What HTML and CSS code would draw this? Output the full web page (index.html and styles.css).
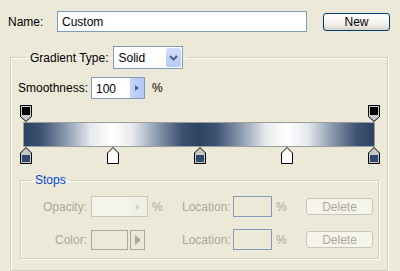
FILE: index.html
```html
<!DOCTYPE html>
<html>
<head>
  <title>Gradient Editor</title>
  <link rel="stylesheet" href="styles.css">
</head>
<body>
  <div class="name-row">
    <label class="name-label" for="name">Name:</label>
    <div class="text-field name-field">Custom</div>
    <button class="xp-button">New</button>
  </div>

  <fieldset class="group">
    <legend class="group-legend">
      <span>Gradient Type:</span>
      <div class="select">
        <span class="select-value">Solid</span>
        <span class="select-arrow">
          <svg width="9" height="6" viewBox="0 0 9 6"><path d="M1 1 L4.5 4.5 L8 1" fill="none" stroke="#4d6185" stroke-width="2"/></svg>
        </span>
      </div>
    </legend>

    <div class="smooth-row">
      <span class="smooth-label">Smoothness:</span>
      <div class="spin-field">
        <span class="spin-value">100</span>
        <span class="spin-arrow"><svg width="4" height="6" viewBox="0 0 4 6"><path d="M0 0 L4 3 L0 6 Z" fill="#4d6185"/></svg></span>
      </div>
      <span class="unit">%</span>
    </div>

    <div class="editor">
      <div class="marker-row">
        <svg class="marker" width="12" height="17" viewBox="0 0 12 17"><path d="M0.5 0.5 H11.5 V11.5 L6 16.5 L0.5 11.5 Z" fill="#c8c8c8" stroke="#000"/><rect x="2" y="2" width="8" height="8" fill="#000"/></svg>
        <svg class="marker" width="12" height="17" viewBox="0 0 12 17"><path d="M0.5 0.5 H11.5 V11.5 L6 16.5 L0.5 11.5 Z" fill="#c8c8c8" stroke="#000"/><rect x="2" y="2" width="8" height="8" fill="#000"/></svg>
      </div>
      <div class="gradient-bar"></div>
      <div class="marker-row">
        <svg class="marker" width="12" height="17" viewBox="0 0 12 17"><path d="M6 0.5 L11.5 6 V16.5 H0.5 V6 Z" fill="#c8c8c8" stroke="#000"/><rect x="2" y="8" width="8" height="7" fill="#2f4a6b"/></svg>
        <svg class="marker" width="12" height="17" viewBox="0 0 12 17"><path d="M6 0.5 L11.5 6 V16.5 H0.5 V6 Z" fill="#fff" stroke="#000"/></svg>
        <svg class="marker" width="12" height="17" viewBox="0 0 12 17"><path d="M6 0.5 L11.5 6 V16.5 H0.5 V6 Z" fill="#c8c8c8" stroke="#000"/><rect x="2" y="8" width="8" height="7" fill="#2f4a6b"/></svg>
        <svg class="marker" width="12" height="17" viewBox="0 0 12 17"><path d="M6 0.5 L11.5 6 V16.5 H0.5 V6 Z" fill="#fff" stroke="#000"/></svg>
        <svg class="marker" width="12" height="17" viewBox="0 0 12 17"><path d="M6 0.5 L11.5 6 V16.5 H0.5 V6 Z" fill="#c8c8c8" stroke="#000"/><rect x="2" y="8" width="8" height="7" fill="#2f4a6b"/></svg>
      </div>
    </div>

    <fieldset class="group stops">
      <legend class="stops-legend">Stops</legend>

      <div class="stop-row">
        <span class="stop-label">Opacity:</span>
        <div class="stop-field">
          <div class="spin-field disabled">
            <span class="spin-value"></span>
            <span class="spin-arrow"><svg width="4" height="6" viewBox="0 0 4 6"><path d="M0 0 L4 3 L0 6 Z" fill="#d6d3c6"/></svg></span>
          </div>
        </div>
        <span class="stop-unit">%</span>
        <span class="loc-label">Location:</span>
        <div class="loc-field"></div>
        <span class="loc-unit">%</span>
        <button class="xp-button disabled">Delete</button>
      </div>

      <div class="stop-row">
        <span class="stop-label">Color:</span>
        <div class="stop-field">
          <div class="color-box"></div>
          <div class="color-arrow"><svg width="6" height="10" viewBox="0 0 6 10"><path d="M0 0 L6 5 L0 10 Z" fill="#aca899"/></svg></div>
        </div>
        <span class="stop-unit"></span>
        <span class="loc-label">Location:</span>
        <div class="loc-field"></div>
        <span class="loc-unit">%</span>
        <button class="xp-button disabled">Delete</button>
      </div>
    </fieldset>
  </fieldset>
</body>
</html>
```

FILE: styles.css
```css
body {
  margin: 0;
  background-color: #ece9d8;
  font-family: "Liberation Sans", Arial, sans-serif;
  font-size: 12px;
  color: #000;
  width: 400px;
  height: 271px;
  overflow: hidden;
}

.name-row {
  display: flex;
  align-items: center;
  padding: 11px 0 0 8px;
  height: 21px;
}

.name-label {
  width: 49px;
}

.text-field {
  box-sizing: border-box;
  height: 21px;
  border: 1px solid #7f9db9;
  background-color: #fff;
  padding: 3px 0 0 4px;
}

.name-field {
  width: 250px;
}

.xp-button {
  box-sizing: border-box;
  font-family: inherit;
  font-size: 12px;
  border: 1px solid #003c74;
  border-radius: 3px;
  background: linear-gradient(#ffffff, #f3f2ec 60%, #d9d5c8);
  color: #000;
  padding: 0;
}

.name-row .xp-button {
  margin-left: 16px;
  width: 67px;
  height: 18px;
}

.group {
  box-sizing: border-box;
  margin: 14px 0 0 10px;
  width: 378px;
  padding: 0 0 11px 7px;
  border: 1px solid #d0d0bf;
  box-shadow: inset 1px 1px 0 #fff, 1px 1px 0 #fff;
  min-inline-size: 0;
}

.group-legend {
  display: flex;
  align-items: center;
  gap: 4px;
  margin-left: 8px;
  padding: 0 4px;
}

.select {
  box-sizing: border-box;
  width: 70px;
  height: 23px;
  border: 1px solid #7f9db9;
  background-color: #fff;
  display: flex;
  align-items: center;
}

.select-value {
  flex: 1;
  padding-left: 5px;
}

.select-arrow {
  width: 15px;
  height: 19px;
  margin-right: 1px;
  border-radius: 2px;
  background: linear-gradient(#d2defa, #b4c8f6);
  display: flex;
  align-items: center;
  justify-content: center;
}

.smooth-row {
  display: flex;
  align-items: center;
  margin-top: 8px;
  height: 22px;
}

.smooth-label {
  width: 73px;
}

.spin-field {
  box-sizing: border-box;
  width: 54px;
  height: 22px;
  border: 1px solid #7f9db9;
  background-color: #fff;
  display: flex;
}

.spin-value {
  flex: 1;
  padding: 4px 0 0 4px;
}

.spin-arrow {
  width: 14px;
  background: linear-gradient(90deg, #c6d6fa, #b2c6f4);
  display: flex;
  align-items: center;
  justify-content: center;
}

.unit {
  margin-left: 7px;
}

.editor {
  margin: 6px 0 0 2px;
  width: 360px;
}

.marker-row {
  display: flex;
  justify-content: space-between;
  height: 17px;
}

.marker {
  display: block;
}

.gradient-bar {
  box-sizing: border-box;
  height: 25px;
  margin: 0 5px 0 3px;
  border: 1px solid #9c9c9c;
  background: linear-gradient(90deg,
    #2c4462 0%, #3c5372 5%, #8b9bae 12%, #e6e9ee 19%, #ffffff 25%,
    #e6e9ee 31%, #8b9bae 38%, #3c5372 45%, #2c4462 50%,
    #3c5372 55%, #8b9bae 62%, #e6e9ee 69%, #ffffff 75%,
    #e6e9ee 81%, #8b9bae 88%, #3c5372 95%, #2c4462 100%);
}

.group.stops {
  margin: 9px 0 0 2px;
  width: 359px;
  padding: 0 0 8px 0;
}

.stops-legend {
  margin-left: 10px;
  padding: 0 4px;
  color: #0046d5;
}

.stop-row {
  display: flex;
  align-items: center;
  height: 21px;
  margin-top: 9px;
  color: #aca899;
}

.stop-row + .stop-row {
  margin-top: 12px;
}

.stop-label {
  width: 66px;
  text-align: right;
  margin-right: 4px;
}

.stop-field {
  width: 57px;
  display: flex;
  gap: 2px;
}

.spin-field.disabled {
  width: 57px;
  height: 21px;
  border-color: #c9c7ba;
  background-color: #f5f4ea;
}

.spin-field.disabled .spin-arrow {
  width: 18px;
  background: #f0efe6;
}

.color-box {
  box-sizing: border-box;
  width: 37px;
  height: 20px;
  border: 1px solid #aca899;
}

.color-arrow {
  box-sizing: border-box;
  width: 15px;
  height: 20px;
  border: 1px solid #aca899;
  display: flex;
  align-items: center;
  justify-content: center;
}

.stop-unit {
  width: 30px;
  padding-left: 4px;
}

.loc-label {
  width: 47px;
  text-align: right;
  margin-right: 4px;
}

.loc-field {
  box-sizing: border-box;
  width: 39px;
  height: 21px;
  border: 1px solid #7f9db9;
}

.loc-unit {
  width: 30px;
  padding-left: 4px;
}

.xp-button.disabled {
  width: 67px;
  height: 17px;
  border-color: #c9c7ba;
  background: #f5f4ea;
  color: #aca899;
}
```
